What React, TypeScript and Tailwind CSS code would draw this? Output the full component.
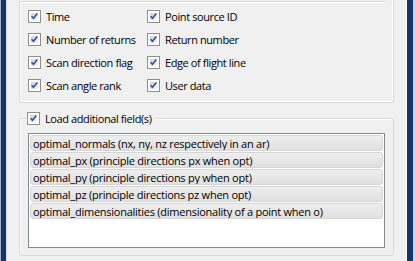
import React from 'react';

const font = { fontFamily: '"Open Sans", "Noto Sans", sans-serif' };

const CheckBox: React.FC = () => (
  <span className="relative flex h-[13px] w-[13px] shrink-0 items-center justify-center border border-[#8e8f8f] bg-white">
    <span className="absolute inset-[2px] bg-gradient-to-br from-[#cad3e2] to-[#f2f4f7]" />
    <svg viewBox="0 0 13 13" className="relative h-[13px] w-[13px]">
      <path d="M3 6.2 L5.3 8.7 L9.8 3" fill="none" stroke="#3d5288" strokeWidth="1.9" />
    </svg>
  </span>
);

const Option: React.FC<{ label: string }> = ({ label }) => (
  <div className="flex h-[13px] items-center gap-[5px]">
    <CheckBox />
    <span className="whitespace-nowrap text-[11px] leading-none tracking-[-0.4px] text-black">{label}</span>
  </div>
);

const fields = [
  'optimal_normals (nx, ny, nz respectively in an ar)',
  'optimal_px (principle directions px when opt)',
  'optimal_py (principle directions py when opt)',
  'optimal_pz (principle directions pz when opt)',
  'optimal_dimensionalities (dimensionality of a point when o)',
];

export default function App() {
  return (
    <div className="flex h-[261px] w-[416px] overflow-hidden bg-[#f0f0f0]" style={font}>
      {/* left window frame */}
      <div className="flex h-full w-[7px] shrink-0">
        <div className="w-[1px] bg-[#9fb0c9]" />
        <div className="w-[5px] bg-[#143466]" />
        <div className="w-[1px] bg-[#d8e0ea]" />
      </div>

      <div className="flex flex-1 flex-col px-[12px]">
        {/* options group (top cut off) */}
        <div className="flex h-[103px] flex-col rounded-b-[3px] border-x border-b border-[#d5d9dc] shadow-[inset_1px_-1px_0_#fff,inset_-1px_0_0_#fff]">
          <div className="mr-[8px] h-[2px] border-b border-[#d8d8d8] shadow-[0_1px_0_#fff]" />
          <div className="ml-[8px] mt-[8px] grid grid-cols-[119px_1fr] gap-y-[10px]">
            <Option label="Time" />
            <Option label="Point source ID" />
            <Option label="Number of returns" />
            <Option label="Return number" />
            <Option label="Scan direction flag" />
            <Option label="Edge of flight line" />
            <Option label="Scan angle rank" />
            <Option label="User data" />
          </div>
        </div>

        {/* additional fields group */}
        <div className="relative mt-[15px] flex h-[138px] flex-col rounded-[3px] border border-[#d5d9dc] px-[8px] pb-[7px] pt-[14px] shadow-[inset_1px_1px_0_#fff]">
          <div className="absolute left-[6px] top-[-7px] flex items-center gap-[5px] bg-[#f0f0f0] px-[1px] pr-[3px]">
            <CheckBox />
            <span className="whitespace-nowrap text-[11px] leading-none tracking-[-0.4px] text-black">Load additional field(s)</span>
          </div>
          <div className="flex flex-1 flex-col gap-[1px] border border-[#828790] bg-white p-[1px]">
            {fields.map((f) => (
              <div
                key={f}
                className="flex h-[16px] items-center overflow-hidden whitespace-nowrap rounded-[3px] border border-[#d6d6d6] bg-gradient-to-b from-[#eeeeee] to-[#e0e0e0] pl-[2px] text-[11px] leading-none tracking-[-0.25px] text-black"
              >
                {f}
              </div>
            ))}
          </div>
        </div>
      </div>

      {/* right window frame */}
      <div className="flex h-full w-[10px] shrink-0">
        <div className="w-[1px] bg-[#ffffff]" />
        <div className="w-[6px] bg-[#143466]" />
        <div className="w-[3px] bg-[#c9d5e6]" />
      </div>
    </div>
  );
}
